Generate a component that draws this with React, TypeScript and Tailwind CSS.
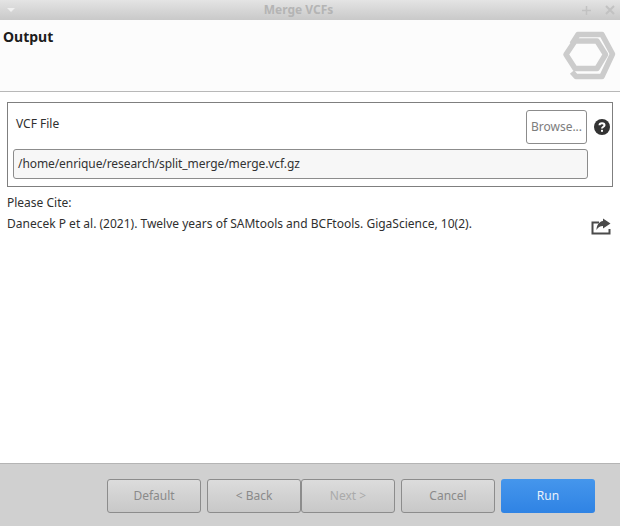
const font = "font-['Noto_Sans',sans-serif]";

function FooterButton({ label, className }: { label: string; className?: string }) {
  return (
    <div
      className={`w-[94px] h-[34px] flex items-center justify-center rounded-[3px] border border-[#8c8c8c] bg-gradient-to-b from-[#dcdcdc] to-[#c8c8c8] text-xs ${className ?? "text-[#8a8a8a]"}`}
    >
      {label}
    </div>
  );
}

function Logo() {
  return (
    <svg width="64" height="58" viewBox="0 0 64 58" fill="none" stroke="#cccccc" strokeWidth="5.5">
      <path d="M16 18 L22 8.5 H46 L56.5 28 L46 50.5 H20 L16 46" strokeLinejoin="round" />
      <path d="M19 15 H41 L49.5 28.5 L41 42.5 H19 L10 28.5 Z" strokeLinejoin="round" />
    </svg>
  );
}

function HelpIcon() {
  return (
    <svg width="16" height="16" viewBox="0 0 16 16" fill="none">
      <circle cx="8" cy="8" r="8" fill="#333333" />
      <path d="M5.5 6.2 C5.5 3.6 10.5 3.6 10.5 6.2 C10.5 7.8 8 7.8 8 9.6" stroke="#ffffff" strokeWidth="2" />
      <rect x="7" y="10.8" width="2" height="2" fill="#ffffff" />
    </svg>
  );
}

function ShareIcon() {
  return (
    <svg width="20" height="18" viewBox="0 0 20 18" fill="none">
      <path d="M8 4.5 H1.5 V15.5 H18.5 V11" stroke="#4a4a4a" strokeWidth="2" />
      <path d="M12 0.5 L19.5 5.5 L12 10.5 V8 C9 8 7 9.5 5.5 12 C5.5 7.5 8 3.5 12 3 Z" fill="#4a4a4a" />
    </svg>
  );
}

export default function App() {
  return (
    <div className={`w-[620px] h-[526px] flex flex-col bg-white overflow-hidden ${font}`}>
      {/* Title bar */}
      <div className="h-[20px] shrink-0 flex items-center justify-between pl-[7px] pr-[5px] bg-gradient-to-b from-[#e4e4e4] to-[#c9c9c9]">
        <div className="w-0 h-0 border-x-[4px] border-x-transparent border-t-[4px] border-t-[#f0f0f0]" />
        <span className="text-xs font-bold text-[#b4b4b4] leading-none">Merge VCFs</span>
        <div className="w-[33px] flex items-center justify-between">
          <svg width="9" height="9" viewBox="0 0 9 9" stroke="#c2c2c2" strokeWidth="1.5">
            <path d="M4.5 0 V9 M0 4.5 H9" />
          </svg>
          <svg width="10" height="10" viewBox="0 0 10 10" stroke="#c2c2c2" strokeWidth="2">
            <path d="M1 1 L9 9 M9 1 L1 9" />
          </svg>
        </div>
      </div>

      {/* Header */}
      <div className="h-[72px] shrink-0 flex justify-between bg-[#fcfcfc] border-b border-[#b8b8b8] pl-[3px]">
        <span className="text-[14px] font-bold text-[#1c1c1c] mt-[7px] leading-[19px]">Output</span>
        <div className="mt-[6px]">
          <Logo />
        </div>
      </div>

      {/* Body */}
      <div className="flex-1 flex flex-col px-[7px] pt-[10px] bg-white text-[#2f2f2f] text-xs">
        <div className="h-[85px] w-[606px] border border-[#7f7f7f] pl-[5px] pr-[1px] pt-[7px]">
          <div className="flex items-start justify-between h-[39px]">
            <span className="ml-[3px] mt-[6px] leading-[16px]">VCF File</span>
            <div className="flex items-center gap-[7px] pr-[1px]">
              <div className="w-[61px] h-[34px] flex items-center justify-center rounded-[3px] border border-[#8c8c8c] text-[#7d7d7d]">
                Browse...
              </div>
              <HelpIcon />
            </div>
          </div>
          <div className="w-[575px] h-[30px] flex items-center rounded-[3px] border border-[#8c8c8c] bg-[#f7f7f7] px-[4px] text-[#333333] tracking-[-0.08px]">
            /home/enrique/research/split_merge/merge.vcf.gz
          </div>
        </div>
        <div className="mt-[7px] leading-[17px]">Please Cite:</div>
        <div className="flex items-start justify-between mt-[4px] pr-[2px] leading-[17px]">
          <span>Danecek P et al. (2021). Twelve years of SAMtools and BCFtools. GigaScience, 10(2).</span>
          <div className="mt-[3px]">
            <ShareIcon />
          </div>
        </div>
      </div>

      {/* Footer */}
      <div className="h-[63px] shrink-0 flex items-start justify-end border-t border-[#b4b4b4] bg-[#d0d0d0] pt-[15px] pr-[25px] gap-[6px]">
        <FooterButton label="Default" />
        <div className="flex">
          <FooterButton label="< Back" />
          <FooterButton label="Next >" className="text-[#aaaaaa]" />
        </div>
        <FooterButton label="Cancel" />
        <div className="w-[94px] h-[34px] flex items-center justify-center rounded-[3px] bg-gradient-to-b from-[#4596ec] to-[#2f83e4] text-xs text-[#e8f1fb]">
          Run
        </div>
      </div>
    </div>
  );
}
